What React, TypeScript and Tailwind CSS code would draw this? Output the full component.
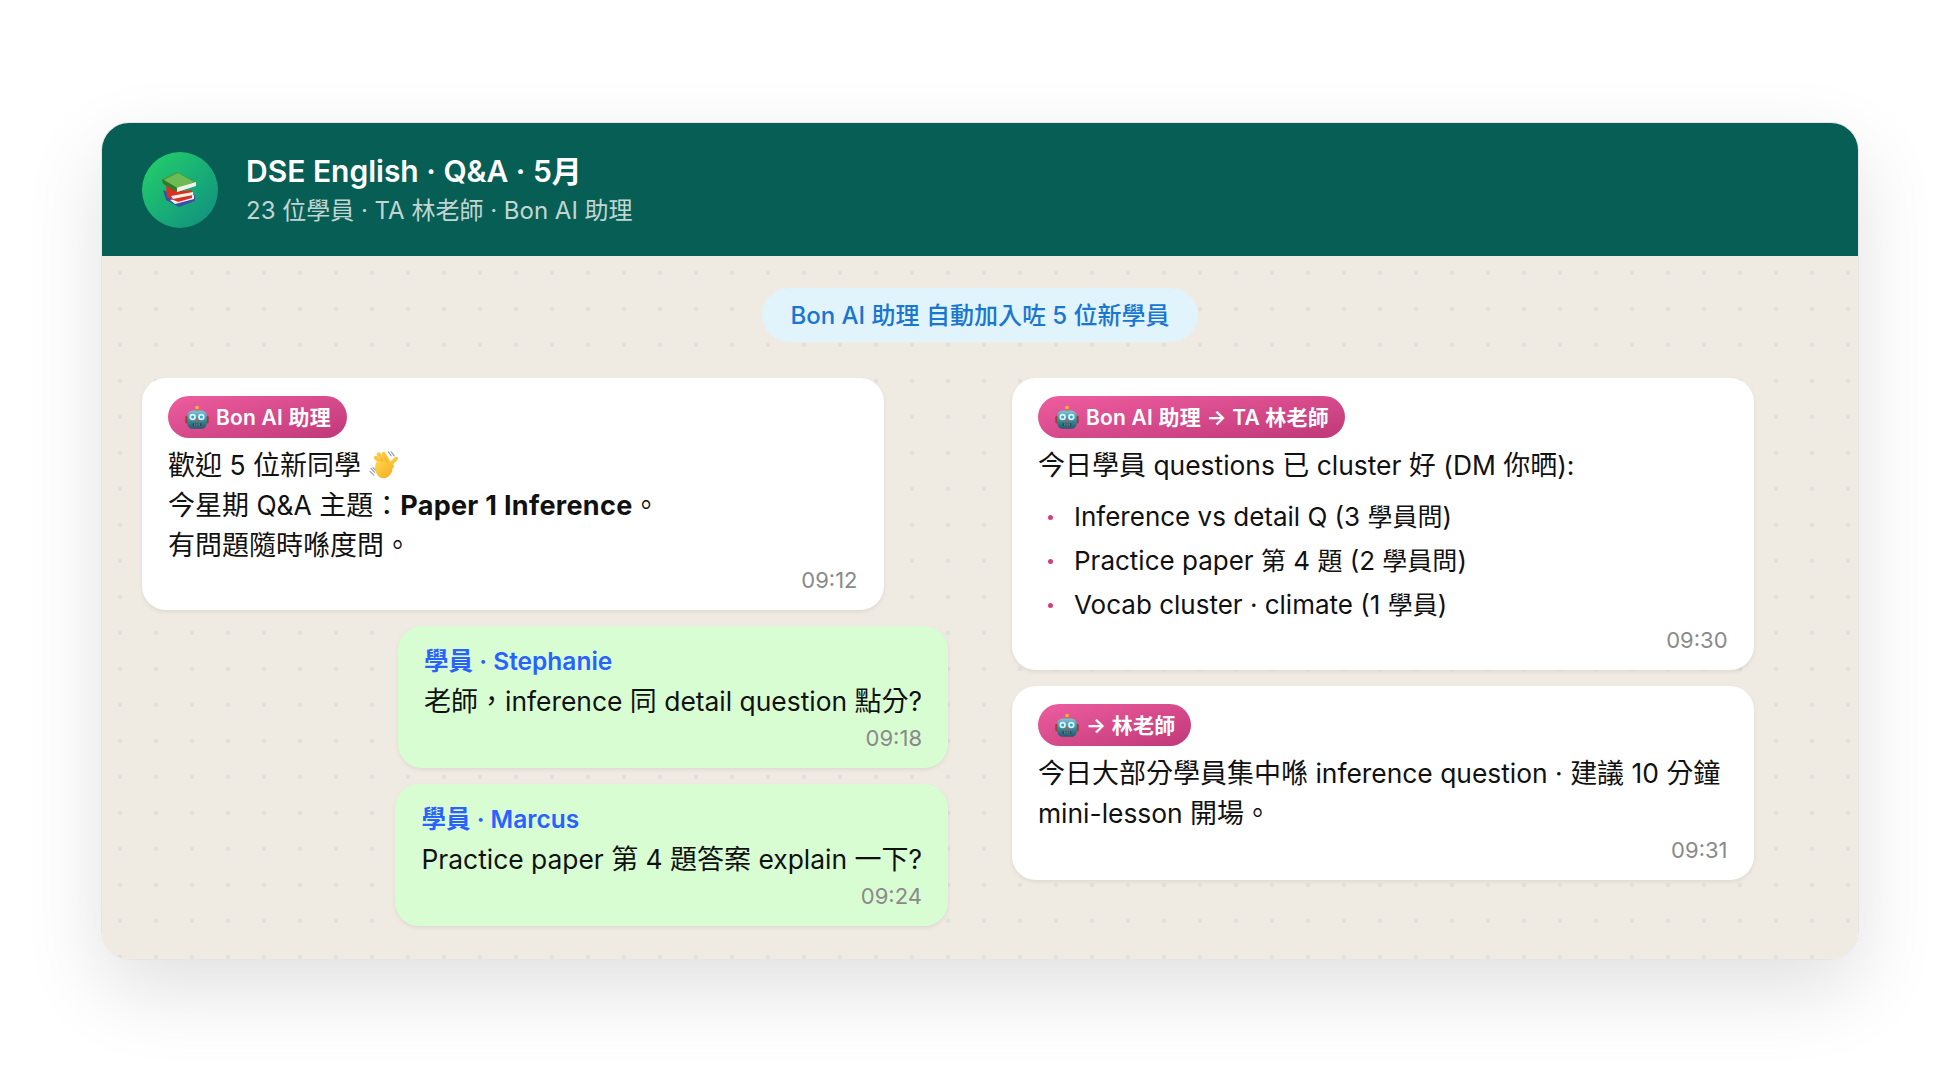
import type { ReactNode } from 'react';

// CJK runs sit a bit larger than the Latin around them in the reference
function Mixed({ text, cjk = 'text-[27px]' }: { text: string; cjk?: string }) {
  return (
    <>
      {text.split(/([\u3000-\u303f\u4e00-\u9fff\uff00-\uffef]+)/).map((part, i) =>
        i % 2 === 1 ? (
          <span key={i} className={`${cjk} leading-none`}>
            {part}
          </span>
        ) : (
          part
        ),
      )}
    </>
  );
}

function RobotEmoji() {
  return (
    <svg viewBox="0 0 24 24" className="h-[26px] w-[26px] shrink-0">
      <defs>
        <linearGradient id="robotHead" x1="0" y1="0" x2="0" y2="1">
          <stop offset="0" stopColor="#7cc4d4" />
          <stop offset="0.5" stopColor="#3f8fa3" />
          <stop offset="1" stopColor="#1f5b6c" />
        </linearGradient>
      </defs>
      <rect x="11.2" y="2.6" width="1.6" height="3" fill="#8b6a3a" />
      <circle cx="12" cy="2.4" r="1.8" fill="#f5b335" />
      <rect x="1.2" y="10" width="3" height="7" rx="1.4" fill="#a33a2e" />
      <rect x="19.8" y="10" width="3" height="7" rx="1.4" fill="#a33a2e" />
      <rect x="3" y="5" width="18" height="17" rx="5" fill="url(#robotHead)" />
      <circle cx="8" cy="11" r="3" fill="#d9f6fb" />
      <circle cx="16" cy="11" r="3" fill="#d9f6fb" />
      <circle cx="8" cy="11" r="1.4" fill="#2aa6cf" />
      <circle cx="16" cy="11" r="1.4" fill="#2aa6cf" />
      <path d="M12 11.5l1.6 3.2h-3.2z" fill="#d9503f" />
      <rect x="8" y="16.6" width="8" height="2.8" rx="0.8" fill="#2f4650" />
      <path d="M10 16.8v2.4M12 16.8v2.4M14 16.8v2.4" stroke="#a9c2ca" strokeWidth="0.6" />
    </svg>
  );
}

function WaveEmoji() {
  return (
    <svg viewBox="0 0 32 32" className="inline-block h-[31px] w-[31px] align-[-6px]">
      <defs>
        <linearGradient id="waveHand" x1="0" y1="0" x2="1" y2="1">
          <stop offset="0" stopColor="#ffd84f" />
          <stop offset="1" stopColor="#f6ab1e" />
        </linearGradient>
      </defs>
      <g stroke="#8f99a3" strokeWidth="1.1" strokeLinecap="round">
        <path d="M3 19l4 4M2 22l4 4M5 18l3 3" />
        <path d="M21 2l3 4M24 2l3 4" />
      </g>
      <g stroke="#fcc53a" strokeWidth="4" strokeLinecap="round" fill="none">
        <path d="M18 17L8 8" />
        <path d="M20 16L11 4.5" />
        <path d="M23 15L16 4" />
        <path d="M25 17l-1-3 5-5" />
      </g>
      <g stroke="#e39a18" strokeWidth="0.7" strokeLinecap="round" fill="none">
        <path d="M13 9.5l5 5.5M17 8l4.5 6.5" />
      </g>
      <path d="M9 12c3-1 12 1 16 3 1 5 0 10-5 13-4 2-8 1-10-2-3-4-4-9-1-14z" fill="url(#waveHand)" />
    </svg>
  );
}

function BooksEmoji() {
  return (
    <svg viewBox="0 0 40 40" className="h-[40px] w-[40px]">
      <path d="M3 20l20 8 12-3v6l-16 6L6 30z" fill="#3c4fa8" />
      <path d="M10 30l24-5v4l-19 5z" fill="#eef0f4" />
      <path d="M6 15l17 6 9-1v8l-14 4-11-5z" fill="#d7321f" />
      <path d="M11 26l22-4v3l-20 4z" fill="#f4f1ea" />
      <path d="M2 9l15-7 19 10-1 4-18 6L4 13z" fill="#4c9a3a" />
      <path d="M4 10l14-7 16 9-16 6z" fill="#6cbb54" />
      <path d="M16 18l20-6v4l-19 6z" fill="#f4f1ea" />
      <path d="M2 9c0 3 1 5 3 6l12 7v-4z" fill="#2f7a2c" />
    </svg>
  );
}

function Tag({ children }: { children: ReactNode }) {
  return (
    <div className="flex h-[42px] w-fit items-center gap-[6px] rounded-full bg-gradient-to-br from-[#ee5d9f] to-[#c03878] pl-4 pr-4 pt-[2px] text-[21px] font-semibold leading-[28px] tracking-[0.2px] text-white">
      <RobotEmoji />
      <span>{children}</span>
    </div>
  );
}

function Time({ children, roomy }: { children: ReactNode; roomy?: boolean }) {
  return (
    <div className={`text-right text-[22px] leading-[26px] text-[#8a8a8a] ${roomy ? 'mt-1' : 'mt-[2px]'}`}>
      {children}
    </div>
  );
}

function WhiteBubble({ children }: { children: ReactNode }) {
  return (
    <div className="w-[92%] rounded-[24px] bg-white px-[26px] pb-[17px] pt-[18px] text-[26.4px] leading-[40px] text-[#111111] shadow-[0_2px_4px_rgba(0,0,0,0.07)]">
      {children}
    </div>
  );
}

function GreenBubble({ name, text, time }: { name: string; text: string; time: string }) {
  return (
    <div className="w-fit self-end rounded-[24px] bg-[#d9fdd3] px-[26px] pb-[17px] pt-[18px] text-[26.4px] leading-[40px] text-[#111111] shadow-[0_2px_4px_rgba(0,0,0,0.07)]">
      <div className="mb-[2px] text-[24.5px] font-semibold leading-[35px] text-[#2a62ff]">{name}</div>
      <div>
        <Mixed text={text} />
      </div>
      <Time roomy>{time}</Time>
    </div>
  );
}

const clusterItems = [
  'Inference vs detail Q (3 學員問)',
  'Practice paper 第 4 題 (2 學員問)',
  'Vocab cluster · climate (1 學員)',
];

export default function App() {
  return (
    <div className="flex min-h-screen justify-center bg-white pt-[122px] font-[Inter,'Noto_Sans_CJK_TC',sans-serif]">
      <div className="h-fit w-[1758px] overflow-hidden rounded-[28px] border border-[#e5e5e8] shadow-[0_30px_80px_rgba(0,0,0,0.12)]">
        {/* Header */}
        <div className="flex h-[133px] items-center gap-7 bg-[#075e54] px-10">
          <div className="flex h-[76px] w-[76px] items-center justify-center rounded-full bg-gradient-to-br from-[#25d366] to-[#128c7e]">
            <BooksEmoji />
          </div>
          <div className="pt-[2px]">
            <div className="text-[30px] font-semibold leading-[38px] text-white">DSE English · Q&amp;A · 5月</div>
            <div className="mt-[2px] text-[24px] leading-[38px] text-white/75">23 位學員 · TA 林老師 · Bon AI 助理</div>
          </div>
        </div>

        {/* Chat body */}
        <div className="bg-[#efeae2] bg-[radial-gradient(circle,#e3dfda_2px,transparent_2.6px)] bg-[size:36px_36px] bg-[position:0_-1px] px-10 pb-[33px] pt-8">
          <div className="flex justify-center">
            <div className="flex h-[54px] w-[436px] items-center justify-center rounded-full bg-[#e1f3fb] pt-px text-[24px] font-medium text-[#1976d2]">
              Bon AI 助理 自動加入咗 5 位新學員
            </div>
          </div>

          <div className="mt-9 grid grid-cols-2 gap-x-16">
            <div className="flex flex-col items-start gap-4">
              <WhiteBubble>
                <Tag>Bon AI 助理</Tag>
                <div className="mt-[7px]">
                  <Mixed text="歡迎 5 位新同學 " />
                  <WaveEmoji />
                  <br />
                  <Mixed text="今星期 Q&A 主題：" />
                  <strong className="text-[27px] font-bold leading-none tracking-[0.3px]">Paper 1 Inference</strong>
                  <Mixed text="。" />
                  <br />
                  <Mixed text="有問題隨時喺度問。" />
                </div>
                <Time>09:12</Time>
              </WhiteBubble>
              <GreenBubble name="學員 · Stephanie" text="老師，inference 同 detail question 點分?" time="09:18" />
              <GreenBubble name="學員 · Marcus" text="Practice paper 第 4 題答案 explain 一下?" time="09:24" />
            </div>

            <div className="flex flex-col items-start gap-4">
              <WhiteBubble>
                <Tag>Bon AI 助理 → TA 林老師</Tag>
                <div className="mt-[7px]">
                  <Mixed text="今日學員 questions 已 cluster 好 (DM 你晒):" />
                </div>
                <ul className="mt-3 flex flex-col gap-1 text-[26px]">
                  {clusterItems.map((item) => (
                    <li key={item} className="flex items-center pl-[10px]">
                      <span className="mr-[21px] h-[5px] w-[5px] rounded-full bg-[#d0407f]" />
                      <span>
                        <Mixed text={item} cjk="text-[25px]" />
                      </span>
                    </li>
                  ))}
                </ul>
                <Time>09:30</Time>
              </WhiteBubble>
              <WhiteBubble>
                <Tag>→ 林老師</Tag>
                <div className="mt-[7px]">
                  <Mixed text="今日大部分學員集中喺 inference question · 建議 10 分鐘 mini-lesson 開場。" />
                </div>
                <Time roomy>09:31</Time>
              </WhiteBubble>
            </div>
          </div>
        </div>
      </div>
    </div>
  );
}
